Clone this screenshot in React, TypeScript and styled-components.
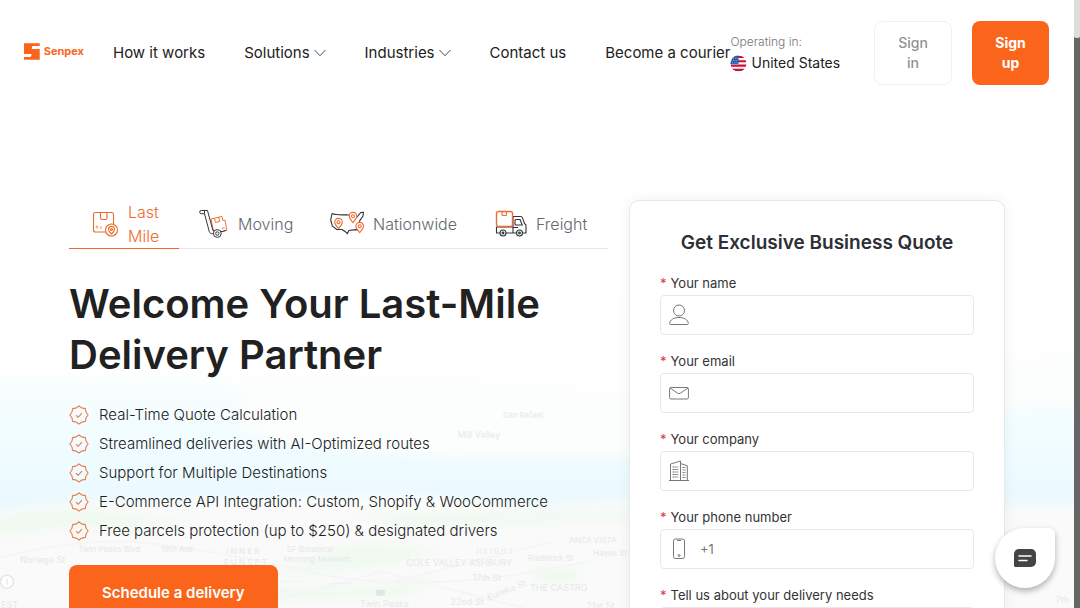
import React from "react";
import styled, { createGlobalStyle } from "styled-components";

const ORANGE = "#fb651b";
const LINE = "#e9e9eb";

const GlobalStyle = createGlobalStyle`
  * { box-sizing: border-box; }
  body { margin: 0; background: #fff; color: #212121; font-family: Inter, "Noto Sans", sans-serif; }
  button, input, select { font: inherit; color: inherit; }
`;

const Page = styled.div`
  position: relative;
  height: 100vh;
  padding-right: 6px;
  overflow-x: hidden;
  overflow-y: auto;
  scrollbar-width: none;
`;

const Header = styled.header`
  display: flex;
  align-items: center;
  padding: 21px 25px 20px 24px;
`;

const Logo = styled.a`
  display: flex;
  align-items: center;
  gap: 4px;
  width: 60px;
  height: 20px;
  margin-bottom: 4px;
  color: ${ORANGE};
  font-size: 11px;
  font-weight: 700;
  text-decoration: none;
`;

const Nav = styled.nav`
  display: flex;
  gap: 39px;
  margin-left: 29px;
`;

const NavLink = styled.a`
  display: flex;
  align-items: center;
  gap: 4px;
  color: #212121;
  font-size: 15px;
  line-height: 24px;
  white-space: nowrap;
  text-decoration: none;
`;

const Region = styled.label`
  display: flex;
  flex-direction: column;
  color: #757575;
  font-size: 12px;
  font-weight: 300;
  line-height: 20px;
  white-space: nowrap;
`;

const RegionPick = styled.span`
  display: flex;
  align-items: center;
  gap: 4px;
`;

const RegionSelect = styled.select`
  appearance: none;
  padding: 0;
  border: 0;
  background: none;
  color: #212121;
  font-size: 14px;
  font-weight: 400;
  line-height: 22px;
`;

const Actions = styled.div`
  display: flex;
  align-items: center;
  gap: 20px;
  margin-left: auto;
`;

const HeaderButton = styled.button<{ $solid?: boolean }>`
  width: ${(p) => (p.$solid ? 77 : 78)}px;
  padding: ${(p) => (p.$solid ? 12 : 11)}px 20px;
  border: ${(p) => (p.$solid ? "0" : "1px solid #f1f1f1")};
  border-radius: 8px;
  background: ${(p) => (p.$solid ? ORANGE : "#fff")};
  color: ${(p) => (p.$solid ? "#fff" : "#929292")};
  font-size: 14px;
  font-weight: ${(p) => (p.$solid ? 700 : 500)};
  line-height: 20px;
`;

const Hero = styled.main`
  position: relative;
  display: grid;
  grid-template-columns: minmax(0, 1fr) 376px;
  gap: 21px;
  align-items: start;
  max-width: 936px;
  margin: 95px auto 0;
`;

const Backdrop = styled.svg`
  position: absolute;
  top: 280px;
  left: 0;
  width: 100%;
  height: 400px;
`;

const Tabs = styled.div`
  display: grid;
  grid-template-columns: 110px 131px 165px 1fr;
  border-bottom: 1px solid #e6e6e6;
`;

const Tab = styled.button<{ $active?: boolean }>`
  display: flex;
  align-items: center;
  gap: 9px;
  height: 49px;
  margin-bottom: -1px;
  padding: 0 0 0 20px;
  border: 0;
  border-bottom: 1px solid ${(p) => (p.$active ? "#ec6b2d" : "transparent")};
  background: none;
  color: ${(p) => (p.$active ? "#ec6b2d" : "#63686e")};
  font-size: 16px;
  font-weight: 300;
  line-height: 24px;
  text-align: left;
`;

const Title = styled.h1`
  margin: 29px 0 20px;
  font-size: 40px;
  font-weight: 600;
  line-height: 51px;
`;

const Benefits = styled.ul`
  margin: 0;
  padding: 0;
  list-style: none;
`;

const Benefit = styled.li`
  display: flex;
  align-items: center;
  gap: 10px;
  font-size: 15px;
  font-weight: 300;
  line-height: 29px;
  white-space: nowrap;
`;

const Primary = styled.button`
  height: 56px;
  margin-top: 20px;
  padding: 0 33px;
  border: 0;
  border-radius: 8px;
  background: ${ORANGE};
  color: #fff;
  font-size: 15px;
  font-weight: 600;
  line-height: 24px;
`;

const QuoteCard = styled.form`
  display: flex;
  flex-direction: column;
  gap: 14px;
  padding: 30px;
  border: 1px solid ${LINE};
  border-radius: 10px;
  background: #fff;
  box-shadow: 0 0 14px rgba(0, 0, 0, 0.06);
`;

const QuoteTitle = styled.h2`
  margin: 0 0 2px;
  color: #2d2e36;
  font-size: 19px;
  font-weight: 600;
  line-height: 24px;
  text-align: center;
`;

const FieldLabel = styled.label`
  display: block;
  color: #333;
  font-size: 13px;
  line-height: 24px;
`;

const Star = styled.span`
  margin-right: 4px;
  color: #dc3545;
`;

const FieldBox = styled.span`
  display: flex;
  align-items: center;
  gap: 11px;
  height: 40px;
  padding: 0 9px 0 8px;
  border: 1px solid ${LINE};
  border-radius: 4px;
  background: #fff;
`;

const FieldInput = styled.input`
  flex: 1;
  min-width: 0;
  height: 100%;
  padding: 0;
  border: 0;
  outline: 0;
  background: none;
  color: #777;
  font-size: 13px;
`;

const Chat = styled.button`
  position: fixed;
  right: 25px;
  bottom: 20px;
  display: grid;
  place-items: center;
  width: 60px;
  height: 60px;
  padding: 0;
  border: 0;
  border-radius: 30px 6px 30px 30px;
  background: #fff;
  box-shadow: 0 3px 6px rgba(0, 0, 0, 0.3);
`;

const ScrollTrack = styled.div`
  position: fixed;
  top: 0;
  right: 0;
  bottom: 0;
  width: 6px;
  background: #666;
`;

const ScrollThumb = styled.div`
  height: 38px;
  border-radius: 0 0 2px 2px;
  background: #dedede;
`;

const Chevron = () => (
  <svg width="12" height="12" viewBox="0 0 12 12" fill="none" stroke="#333" strokeWidth="0.9">
    <path d="M.5 3 6 8.700 11.500 3" />
  </svg>
);

const Flag = () => (
  <svg width="17" height="17" viewBox="0 0 17 17">
    <clipPath id="flag-round"><circle cx="8.500" cy="8.500" r="8" /></clipPath>
    <g clipPath="url(#flag-round)">
      <rect width="17" height="17" fill="#f7f3f5" />
      <path d="M0 2h17M0 6.300h17M0 10.600h17M0 14.900h17" stroke="#c8143c" strokeWidth="2.100" />
      <rect width="8.500" height="9" fill="#2459a8" />
      <path d="M3 3h5M1 5.500h7M2 7.800h6" stroke="#c9d9f0" strokeWidth=".8" strokeDasharray="1 1.300" />
    </g>
  </svg>
);

const Pin = ({ x, y }: { x: number; y: number }) => (
  <g transform={`translate(${x} ${y})`} stroke="#ef6a34" fill="#fff">
    <path d="M0 5.600C-2.200 3-3.800 1.500-3.800-.8a3.800 3.800 0 0 1 7.600 0C3.800 1.500 2.200 3 0 5.600Z" />
    <circle cy="-.7" r="1.500" />
  </g>
);

const BoxIcon = () => (
  <svg width="30" height="28" viewBox="0 0 30 28" fill="none" stroke="#ec6b2d" strokeWidth="1.100">
    <path d="M17 22H6.500A2 2 0 0 1 4.500 20V4.500a2 2 0 0 1 2-2h16a2 2 0 0 1 2 2V14" />
    <path d="M11.500 2.500V8a1.500 1.500 0 0 0 1.500 1.500h3.500A1.500 1.500 0 0 0 18 8V2.500" />
    <path d="M8 16v3M6.600 17.300 8 15.900l1.400 1.400M12 19v-3" strokeWidth=".7" />
    <circle cx="22.500" cy="20" r="6" fill="#fff" />
    <path d="M22.500 24c-2.200-2-3-3-3-4.600a3 3 0 0 1 6 0c0 1.600-.8 2.600-3 4.600Z" />
    <circle cx="22.500" cy="19.500" r="1" />
  </svg>
);

const MovingIcon = () => (
  <svg width="30" height="30" viewBox="0 0 30 30" fill="none" stroke="#30343a" strokeWidth="1">
    <path d="m12 10 11-2.600 1 4.200 2-.4 1.800 10-10.300 3-3-1.700Z" stroke="#ef7040" />
    <path d="m15.500 9.200.9 4.200 4.200-.9-.9-4.200M23 19.300l2.600-.5" stroke="#ef7040" />
    <path d="M8.500 1.500H2.300a1.600 1.600 0 0 0 0 3.200h3.200l4.800 18c.4 1.300 1.800 2.200 3 2l1.700-.4M8.500 1.500l5.300 19.700 1.800.5M21.500 22.900l5.500-1.400" />
    <path d="M5.500 1.500v3.200" />
    <circle cx="18.300" cy="24.500" r="3.900" fill="#fff" /><circle cx="18.300" cy="24.500" r="1.700" />
  </svg>
);

const NationIcon = () => (
  <svg width="34" height="28" viewBox="0 0 34 28" fill="none" stroke="#30343a" strokeWidth="1.100">
    <path d="M2 3.500c4 1.800 8.500 1.500 15 1.300l4 .7 3 2.500 3-1 3.800-4.500 2.700-.2-.6 4-2.700 3.500-1.800 4.500L28 20M2 3.500.7 10l1.600 6 4.400 3.500h5.500l3.200 2.300 2 1.800 1.500-3.200 7-.8 2 .3" />
    <Pin x={8.500} y={13} /><Pin x={23} y={7} /><Pin x={29.700} y={17} />
  </svg>
);

const TruckIcon = () => (
  <svg width="32" height="28" viewBox="0 0 32 28" fill="none" stroke="#30343a" strokeWidth="1.100">
    <path d="M1.500 17v6H5M11 23h10.500M18 17H1.500M18 6.500h7.500a2 2 0 0 1 2 1.400l2 5.600 1.500 1.500v8h-3.500M18 6.500V23M21 9.500h4l2.300 5.500H21a1 1 0 0 1-1-1v-3.500a1 1 0 0 1 1-1ZM18 17.500h5" />
    <rect x="1.500" y="1.500" width="16" height="15" rx="2" fill="#fff" stroke="#ef6a34" strokeWidth="1.400" />
    <path d="M7 1.500v3a1 1 0 0 0 1 1h2.500a1 1 0 0 0 1-1v-3" stroke="#ef6a34" />
    <circle cx="8" cy="23" r="3" fill="#fff" /><circle cx="24.500" cy="23" r="3" fill="#fff" />
    <circle cx="8" cy="23" r=".9" /><circle cx="24.500" cy="23" r=".9" />
  </svg>
);

const BadgeIcon = () => (
  <svg width="20" height="20" viewBox="1 1 22 22" fill="none" stroke="#ec7a48" strokeWidth="1.200" strokeLinejoin="round">
    <path d="m12 2 2.700 2c.4.300.8.400 1.300.4l3 .6.600 3c0 .500.200.900.400 1.300L22 12l-2 2.700c-.2.400-.4.800-.4 1.300l-.6 3-3 .6c-.5 0-.9.200-1.300.4L12 22l-2.700-2c-.4-.2-.8-.4-1.300-.4L5 19l-.6-3c0-.5-.2-.9-.4-1.300L2 12l2-2.700c.2-.4.400-.8.400-1.300L5 5l3-.6c.5 0 .9-.1 1.300-.4Z" />
    <path d="m8.800 12.200 2.200 2.300 4.300-4.600" />
  </svg>
);

const UserIcon = () => (
  <svg width="20" height="22" viewBox="0 0 20 22" fill="none" stroke="#777">
    <circle cx="10" cy="6.500" r="5.500" />
    <path d="M.7 19.500C.9 15.600 5 13.500 10 13.500s9.100 2.100 9.300 6c0 .6-.3 1-.9 1H1.600c-.6 0-.9-.4-.9-1Z" />
  </svg>
);

const MailIcon = () => (
  <svg width="20" height="22" viewBox="0 0 20 22" fill="none" stroke="#777">
    <rect x=".6" y="5.500" width="18.800" height="11.500" rx="1.200" />
    <path d="m1 6 7.600 5.200a2.400 2.400 0 0 0 2.800 0L19 6" />
  </svg>
);

const CompanyIcon = () => (
  <svg width="20" height="22" viewBox="0 0 20 22" fill="none" stroke="#777">
    <path d="M0 20.500h20M1.500 20.500V4l10-3v19.500M11.500 3.500l6.800 2.300v14.700" />
    <path d="M3.500 7h6M3.500 9.500h6M3.500 12h6M3.500 14.500h6M3.500 17h6M13.500 7.500h3M13.500 10h3M13.500 12.500h3M13.500 15h3M13.500 17.500h3" strokeDasharray="1.500 .4" />
  </svg>
);

const PhoneIcon = () => (
  <svg width="20" height="22" viewBox="0 0 20 22" fill="none" stroke="#777">
    <rect x="4.500" y="1" width="11" height="19.500" rx="2" />
    <path d="M8 2.500h4" /><circle cx="10" cy="17.500" r="1" />
  </svg>
);

const mapLabels: [number, number, string, number][] = [
  [455, 157, "Mill Valley", 9], [500, 137, "San Rafael", 8], [20, 281, "Noriega St", 9],
  [78, 270, "Twin Peaks Blvd", 8], [160, 270, "19th Ave", 8], [225, 272, "I N N E R", 8], [222, 283, "S U N S E T", 8],
  [285, 270, "SF Botanical", 8], [282, 280, "Morning Museum", 8],
  [404, 284, "COLE VALLEY ASHBURY", 9], [474, 272, "H E I G H T", 7],
  [566, 262, "ANZA VISTA", 8], [525, 279, "Frederick St", 8], [590, 274, "Hayes St", 8],
  [470, 299, "17th St", 9], [527, 309, "THE CASTRO", 9], [448, 323, "22nd St", 9],
  [358, 325, "Twin Peaks", 9], [583, 327, "21st St", 9], [1050, 321, "7th", 9], [1, 326, "EST", 9],
];

const MapBackdrop = () => (
  <Backdrop viewBox="0 0 1074 400" preserveAspectRatio="xMidYMin slice" aria-hidden="true">
    <defs>
      <linearGradient id="sky" x2="0" y2="1"><stop stopColor="#fafeff" /><stop offset=".4" stopColor="#f1fdff" /><stop offset="1" stopColor="#e8f7fe" /></linearGradient>
      <linearGradient id="land" x2="0" y2="1"><stop stopColor="#fff" /><stop offset=".4" stopColor="#fdfefd" /><stop offset="1" stopColor="#fbfcfb" /></linearGradient>
      <filter id="soft"><feGaussianBlur stdDeviation="4" /></filter>
    </defs>
    <rect width="1074" height="400" fill="url(#land)" />
    <g filter="url(#soft)">
      <path d="M-20 97h240l50 30 80 38 290 10 460-60V245L560 225 400 215 180 218 90 222-20 240Z" fill="url(#sky)" />
      <path d="M240 100q200-10 420 20l440-50v55q-230 5-440 50-300 10-420-25Z" fill="#fcfdfd" />
      <path d="M-20 232q120-20 260-10t400-4l460 6v190H-20Z" fill="#f9faf9" />
      <path d="M-20 240q80-20 150-6t130-3q-90 18-150 16T-20 255ZM350 232l300-3v8l-250 8ZM340 265q50-5 100 8l-80 14-90 8ZM210 305q150 5 230-10l-40 20-150 5Z" fill="#f0faf0" />
      <path d="M530 288h50l-15 12-30-2Z" fill="#edf9ee" />
    </g>
    <path d="M0 276q80-20 140-15t170 30 280-12M270 320l110-30 140 36M260 301l40-2M390 300l160-40" fill="none" stroke="#f4f6f5" strokeWidth="2" />
    <path d="M328 302h22M280 309h9" stroke="#e2f3fb" />
    <g fill="#e6e9e9">
      {mapLabels.map(([x, y, text, size]) => (
        <text key={text} x={x} y={y} fontSize={size}>{text}</text>
      ))}
      <text x="486" y="319" fontSize="9" transform="rotate(-22 486 319)">Eureka St</text>
    </g>
    <circle cx="7" cy="300" r="6.500" fill="#fff" stroke="#e4e7e7" strokeWidth="1.500" />
    <path d="M7 297v6" stroke="#dfe2e2" />
    <rect x="374" y="308" width="9" height="6" rx="2" fill="#e2e5e5" />
  </Backdrop>
);

const benefits = [
  "Real-Time Quote Calculation",
  "Streamlined deliveries with AI-Optimized routes",
  "Support for Multiple Destinations",
  "E-Commerce API Integration: Custom, Shopify & WooCommerce",
  "Free parcels protection (up to $250) & designated drivers",
];

const fields = [
  { id: "name", label: "Your name", icon: <UserIcon />, type: "text" },
  { id: "email", label: "Your email", icon: <MailIcon />, type: "email" },
  { id: "company", label: "Your company", icon: <CompanyIcon />, type: "text" },
  { id: "phone", label: "Your phone number", icon: <PhoneIcon />, type: "tel", value: "+1" },
  { id: "needs", label: "Tell us about your delivery needs", icon: null, type: "text" },
];

export default function App() {
  return (
    <Page>
      <GlobalStyle />
      <MapBackdrop />
      <Header>
        <Logo href="#">
          <svg width="16" height="17" viewBox="0 0 16 17" fill={ORANGE}>
            <path d="M0 0h16v3h-6.500Q8 3 8 4.500V6h8v11H0v-3h6q1.500 0 1.500-1.500V11H0Z" />
          </svg>
          Senpex
        </Logo>
        <Nav>
          <NavLink href="#">How it works</NavLink>
          <NavLink href="#">Solutions<Chevron /></NavLink>
          <NavLink href="#">Industries<Chevron /></NavLink>
          <NavLink href="#">Contact us</NavLink>
          <NavLink href="#">Become a courier</NavLink>
        </Nav>
        <Region>
          Operating in:
          <RegionPick>
            <Flag />
            <RegionSelect><option>United States</option></RegionSelect>
          </RegionPick>
        </Region>
        <Actions>
          <HeaderButton type="button">Sign in</HeaderButton>
          <HeaderButton type="button" $solid>Sign up</HeaderButton>
        </Actions>
      </Header>
      <Hero>
        <section>
          <Tabs role="tablist">
            <Tab role="tab" aria-selected="true" $active><BoxIcon />Last<br />Mile</Tab>
            <Tab role="tab"><MovingIcon />Moving</Tab>
            <Tab role="tab"><NationIcon />Nationwide</Tab>
            <Tab role="tab"><TruckIcon />Freight</Tab>
          </Tabs>
          <Title>Welcome Your Last-Mile Delivery Partner</Title>
          <Benefits>
            {benefits.map((text) => (
              <Benefit key={text}><BadgeIcon />{text}</Benefit>
            ))}
          </Benefits>
          <Primary type="button">Schedule a delivery</Primary>
        </section>
        <QuoteCard>
          <QuoteTitle>Get Exclusive Business Quote</QuoteTitle>
          {fields.map((f) => (
            <div key={f.id}>
              <FieldLabel htmlFor={f.id}><Star>*</Star>{f.label}</FieldLabel>
              <FieldBox>
                {f.icon}
                <FieldInput id={f.id} type={f.type} defaultValue={f.value} />
              </FieldBox>
            </div>
          ))}
        </QuoteCard>
      </Hero>
      <Chat type="button" aria-label="Chat">
        <svg width="22" height="18" viewBox="0 0 22 18">
          <path d="M5 0h12a5 5 0 0 1 5 5v8a5 5 0 0 1-5 5H1.500A1.500 1.500 0 0 1 0 16.500V5a5 5 0 0 1 5-5Z" fill="#444" />
          <path d="M5 7h12M5 11.500h8" stroke="#fff" strokeWidth="1.500" strokeLinecap="round" />
        </svg>
      </Chat>
      <ScrollTrack aria-hidden="true"><ScrollThumb /></ScrollTrack>
    </Page>
  );
}
